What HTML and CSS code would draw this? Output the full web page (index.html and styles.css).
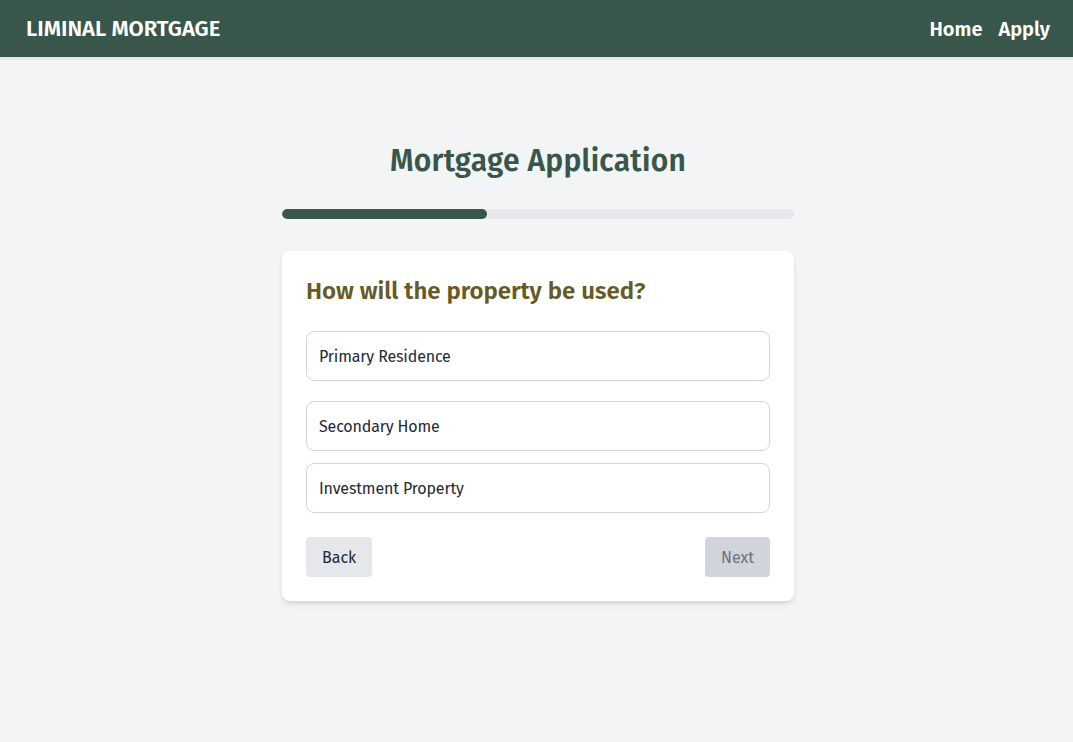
FILE: index.html
```html
<!DOCTYPE html>
<html lang="en">
<head>
<meta charset="utf-8">
<title>Liminal Mortgage</title>
<link rel="stylesheet" href="styles.css">
</head>
<body>
<header class="nav">
  <div class="brand">LIMINAL MORTGAGE</div>
  <nav class="links"><a href="#">Home</a><a href="#">Apply</a></nav>
</header>
<div class="page">
  <main class="main">
    <h1 class="title">Mortgage Application</h1>
    <div class="progress"><div class="progress-fill" style="width:40%"></div></div>
    <section class="card">
      <h2 class="question">How will the property be used?</h2>
      <div class="options">
        <button class="option first">Primary Residence</button>
        <button class="option">Secondary Home</button>
        <button class="option">Investment Property</button>
      </div>
      <div class="actions">
        <button class="btn back">Back</button>
        <button class="btn next" disabled>Next</button>
      </div>
    </section>
  </main>
</div>
</body>
</html>
```
FILE: styles.css
```css
* { box-sizing: border-box; }
html, body { margin: 0; padding: 0; }
body {
  background: #f3f4f6;
  font-family: "Fira Sans", "Noto Sans", sans-serif;
  color: #1f2937;
  min-height: 742px;
}
.nav {
  height: 57px;
  background: #38574a;
  color: #fff;
  display: flex;
  align-items: center;
  justify-content: space-between;
  padding: 0 23px 0 26px;
  box-shadow: 0 3px 0 #e8e9eb;
  position: relative;
}
.brand { font-size: 22px; font-weight: 600; }
.links { display: flex; gap: 16px; }
.links a { color: #fff; text-decoration: none; font-size: 20px; font-weight: 600; }
.page { padding-left: 3px; }
.main {
  width: 512px;
  margin: 0 auto;
  padding-top: 84px;
}
.title {
  margin: 0;
  text-align: center;
  font-size: 30px;
  font-weight: 600;
  letter-spacing: 0.25px;
  color: #38574a;
  line-height: 40px;
}
.progress {
  margin-top: 28px;
  height: 10px;
  background: #e5e7eb;
  border-radius: 5px;
  overflow: hidden;
}
.progress-fill { height: 100%; background: #38574a; border-radius: 5px; }
.card {
  margin-top: 32px;
  background: #fff;
  border-radius: 8px;
  box-shadow: 0 4px 6px -1px rgba(0,0,0,0.1), 0 2px 4px -1px rgba(0,0,0,0.06);
  padding: 24px;
}
.question {
  margin: 0 0 24px;
  font-size: 24px;
  font-weight: 600;
  line-height: 32px;
  color: #665a25;
}
.options { display: flex; flex-direction: column; gap: 12px; }
.option {
  height: 50px;
  text-align: left;
  background: #fff;
  border: 1px solid #d1d5db;
  border-radius: 8px;
  padding: 0 12px;
  font: inherit;
  font-size: 16px;
  letter-spacing: -0.15px;
  color: #1f2937;
}
.option.first { margin-bottom: 8px; }
.actions {
  margin-top: 24px;
  display: flex;
  justify-content: space-between;
}
.btn {
  height: 40px;
  padding: 0 16px;
  border: 0;
  border-radius: 4px;
  font: inherit;
  font-size: 16px;
}
.back { background: #e5e7eb; color: #1f2937; }
.next { background: #d1d5db; color: #6b7280; }
```
